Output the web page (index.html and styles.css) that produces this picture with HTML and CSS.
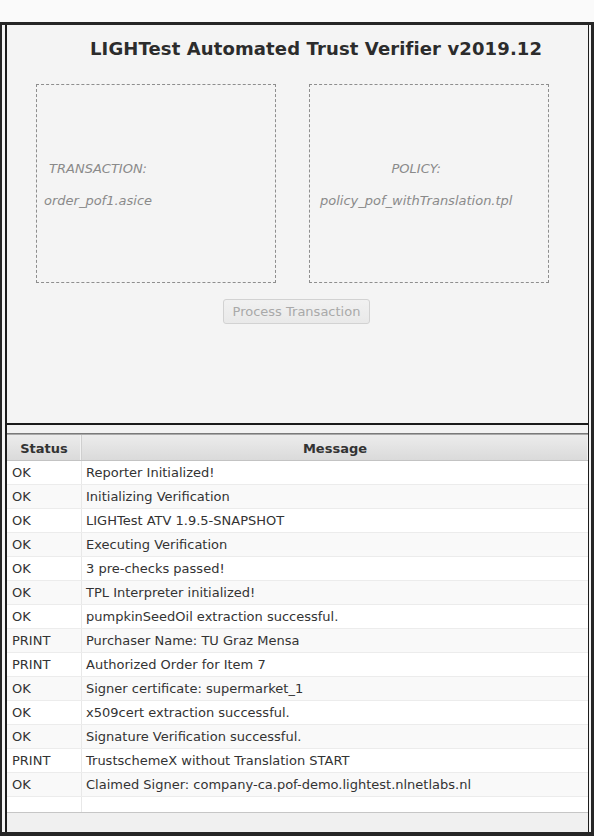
FILE: index.html
```html
<!DOCTYPE html>
<html>
<head>
<meta charset="utf-8">
<link rel="stylesheet" href="styles.css">
</head>
<body>
<div class="window">
  <div class="app">
    <section class="top">
      <h1 class="title">LIGHTest Automated Trust Verifier v2019.12</h1>
      <div class="drops">
        <div class="drop drop-a">
          <div class="drop-inner">
            <span class="drop-label">TRANSACTION:</span>
            <span class="drop-file">order_pof1.asice</span>
          </div>
        </div>
        <div class="drop drop-b">
          <div class="drop-inner">
            <span class="drop-label">POLICY:</span>
            <span class="drop-file">policy_pof_withTranslation.tpl</span>
          </div>
        </div>
      </div>
      <div class="actions">
        <button class="btn" disabled>Process Transaction</button>
      </div>
    </section>
    <section class="table">
      <div class="thead">
        <div class="th th-status">Status</div>
        <div class="th th-msg">Message</div>
      </div>
      <div class="tbody">
        <div class="row"><div class="c-status">OK</div><div class="c-msg">Reporter Initialized!</div></div>
        <div class="row"><div class="c-status">OK</div><div class="c-msg">Initializing Verification</div></div>
        <div class="row"><div class="c-status">OK</div><div class="c-msg">LIGHTest ATV 1.9.5-SNAPSHOT</div></div>
        <div class="row"><div class="c-status">OK</div><div class="c-msg">Executing Verification</div></div>
        <div class="row"><div class="c-status">OK</div><div class="c-msg">3 pre-checks passed!</div></div>
        <div class="row"><div class="c-status">OK</div><div class="c-msg">TPL Interpreter initialized!</div></div>
        <div class="row"><div class="c-status">OK</div><div class="c-msg">pumpkinSeedOil extraction successful.</div></div>
        <div class="row"><div class="c-status">PRINT</div><div class="c-msg">Purchaser Name: TU Graz Mensa</div></div>
        <div class="row"><div class="c-status">PRINT</div><div class="c-msg">Authorized Order for Item 7</div></div>
        <div class="row"><div class="c-status">OK</div><div class="c-msg">Signer certificate: supermarket_1</div></div>
        <div class="row"><div class="c-status">OK</div><div class="c-msg">x509cert extraction successful.</div></div>
        <div class="row"><div class="c-status">OK</div><div class="c-msg">Signature Verification successful.</div></div>
        <div class="row"><div class="c-status">PRINT</div><div class="c-msg">TrustschemeX without Translation START</div></div>
        <div class="row"><div class="c-status">OK</div><div class="c-msg">Claimed Signer: company-ca.pof-demo.lightest.nlnetlabs.nl</div></div>
        <div class="row row-empty"><div class="c-status"></div><div class="c-msg"></div></div>
      </div>
      <div class="tfoot"></div>
    </section>
  </div>
</div>
</body>
</html>
```
FILE: styles.css
```css
html, body {
  margin: 0;
  padding: 0;
  background: #fafafa;
  font-family: "DejaVu Sans", "Liberation Sans", sans-serif;
  font-size: 13px;
  color: #333;
}

.window {
  margin-top: 22px;
  height: 814px;
  box-sizing: border-box;
  border-top: 3px solid #262626;
  border-left: 2px solid #262626;
  border-right: 3px solid #262626;
  border-bottom: 4px solid #262626;
  background: #f4f4f4;
  padding: 0 2px 0 3px;
}

.app {
  height: 807px;
  box-sizing: border-box;
  border-left: 2px solid #1c1c1c;
  border-right: 1px solid #1c1c1c;
  background: #f2f2f2;
  display: flex;
  flex-direction: column;
}

.top {
  height: 400px;
  flex: none;
  box-sizing: border-box;
  border-bottom: 2px solid #1a1a1a;
  background: #f4f4f4;
  display: flex;
  flex-direction: column;
}

.title {
  margin: 0;
  padding: 13px 0 0 83px;
  font-size: 18px;
  line-height: 22px;
  font-weight: bold;
  letter-spacing: 0.12px;
  color: #2c2c2c;
}

.drops {
  margin-top: 24px;
  padding-left: 29px;
  display: flex;
  gap: 33px;
}

.drop {
  width: 240px;
  height: 199px;
  box-sizing: border-box;
  border: 1px dashed #8e8e8e;
  display: flex;
  align-items: center;
}

.drop-a { padding-left: 7px; }
.drop-b { padding-left: 10px; }

.drop-inner {
  display: flex;
  flex-direction: column;
  align-items: center;
  gap: 17px;
  margin-top: 1px;
  font-style: italic;
  color: #8a8a8a;
  line-height: 15px;
}

.actions {
  margin-top: 16px;
  display: flex;
  justify-content: center;
  padding-right: 2px;
}

.btn {
  height: 25px;
  padding: 0 9px;
  font-family: "DejaVu Sans", "Liberation Sans", sans-serif;
  font-size: 13px;
  color: #a9a9a9;
  background: linear-gradient(#f1f1f1, #e9e9e9);
  border: 1px solid #d2d2d2;
  border-radius: 3px;
}

.table {
  margin-top: 8px;
  border-top: 1px solid #7a7a7a;
  display: flex;
  flex-direction: column;
  flex: 1;
}

.thead {
  display: flex;
  height: 27px;
  flex: none;
  box-sizing: border-box;
  border-top: 1px solid #a9a9a9;
  border-bottom: 1px solid #c3c3c3;
  background: linear-gradient(#ececec, #dadada);
  font-weight: bold;
}

.th {
  display: flex;
  align-items: center;
  justify-content: center;
  padding-top: 1px;
}

.th-status {
  width: 75px;
  box-sizing: border-box;
  border-right: 1px solid #cfcfcf;
  box-shadow: inset -1px 0 #f2f2f2;
}

.th-msg {
  flex: 1;
  border-right: 1px solid #f0f0f0;
  padding-left: 1px;
}

.tbody {
  height: 352px;
  flex: none;
  box-sizing: border-box;
  background: #fff;
  border-bottom: 1px solid #c6c6c6;
  overflow: hidden;
}

.row {
  display: flex;
  height: 24px;
  box-sizing: border-box;
  border-bottom: 1px solid #ececec;
  line-height: 24px;
}

.row:nth-child(even) {
  background: #f9f9f9;
}

.row-empty {
  border-bottom: none;
}

.c-status {
  width: 75px;
  border-right: 1px solid #e8e8e8;
  padding-left: 5px;
  box-sizing: border-box;
}

.c-msg {
  flex: 1;
  padding-left: 4px;
}

.tfoot {
  flex: 1;
  background: #f0f0f0;
}
```
